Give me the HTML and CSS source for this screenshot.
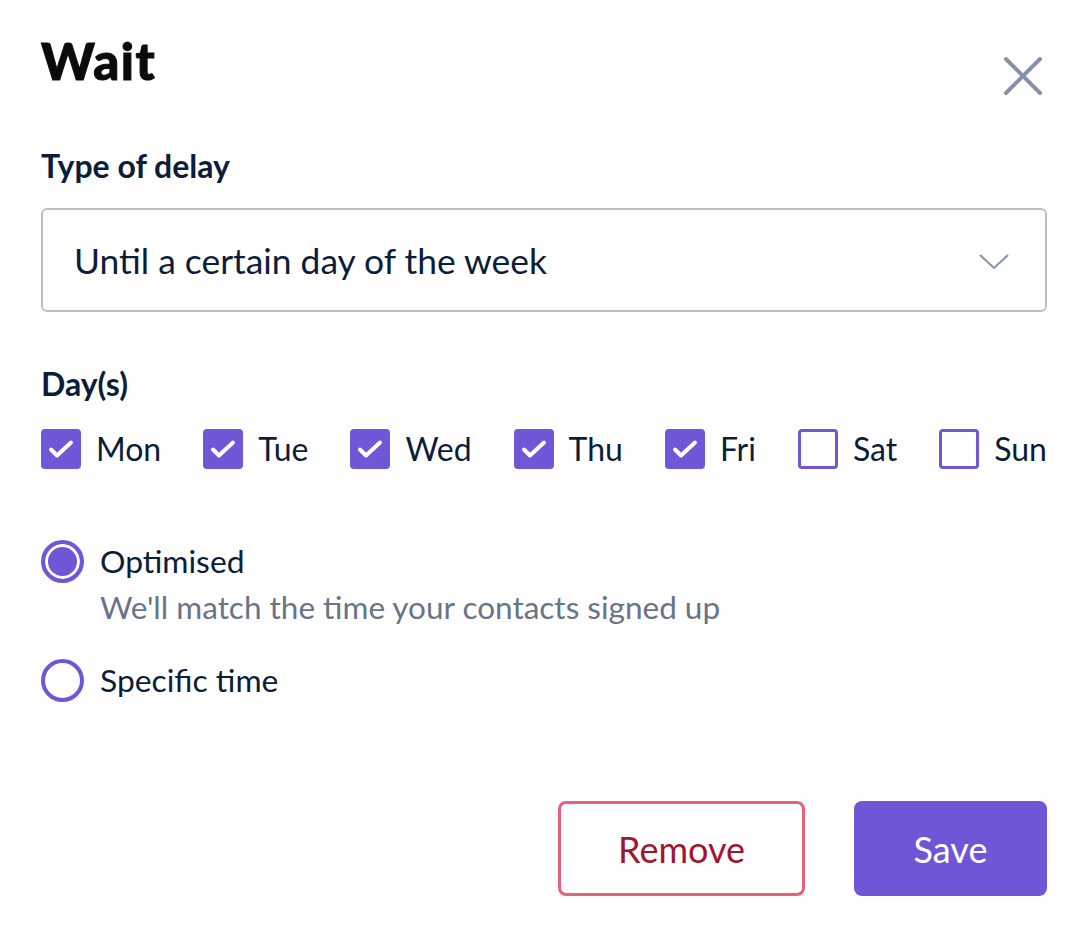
FILE: index.html
```html
<!DOCTYPE html>
<html lang="en">
<head>
    <meta charset="UTF-8">
    <meta name="viewport" content="width=device-width, initial-scale=1.0">
    <title>Wait</title>
    <link rel="stylesheet" href="styles.css">
</head>
<body>
    <div class="panel">
        <div class="panel-header">
            <h1>Wait</h1>
            <button class="close-button" aria-label="Close">
                <svg width="42" height="42" viewBox="0 0 42 42">
                    <path d="M4 4 L38 38 M38 4 L4 38" stroke="#8592a6" stroke-width="4" stroke-linecap="round" fill="none"/>
                </svg>
            </button>
        </div>

        <!-- Type of delay -->
        <div class="field-label">Type of delay</div>
        <div class="select-box">
            <span>Until a certain day of the week</span>
            <svg class="chevron" width="30" height="16" viewBox="0 0 30 16">
                <path d="M1 1 L15 14 L29 1" stroke="#8592a6" stroke-width="2" fill="none"/>
            </svg>
        </div>

        <!-- Days -->
        <div class="field-label days-label">Day(s)</div>
        <div class="day-row">
            <label class="day"><span class="check checked"><svg width="40" height="40" viewBox="0 0 40 40"><path d="M10 20.5 L16 26.5 L30 13.5" stroke="#fff" stroke-width="4" stroke-linecap="round" stroke-linejoin="round" fill="none"/></svg></span>Mon</label>
            <label class="day"><span class="check checked"><svg width="40" height="40" viewBox="0 0 40 40"><path d="M10 20.5 L16 26.5 L30 13.5" stroke="#fff" stroke-width="4" stroke-linecap="round" stroke-linejoin="round" fill="none"/></svg></span>Tue</label>
            <label class="day"><span class="check checked"><svg width="40" height="40" viewBox="0 0 40 40"><path d="M10 20.5 L16 26.5 L30 13.5" stroke="#fff" stroke-width="4" stroke-linecap="round" stroke-linejoin="round" fill="none"/></svg></span>Wed</label>
            <label class="day"><span class="check checked"><svg width="40" height="40" viewBox="0 0 40 40"><path d="M10 20.5 L16 26.5 L30 13.5" stroke="#fff" stroke-width="4" stroke-linecap="round" stroke-linejoin="round" fill="none"/></svg></span>Thu</label>
            <label class="day"><span class="check checked"><svg width="40" height="40" viewBox="0 0 40 40"><path d="M10 20.5 L16 26.5 L30 13.5" stroke="#fff" stroke-width="4" stroke-linecap="round" stroke-linejoin="round" fill="none"/></svg></span>Fri</label>
            <label class="day"><span class="check"></span>Sat</label>
            <label class="day"><span class="check"></span>Sun</label>
        </div>

        <!-- Time options -->
        <div class="radio-group">
            <div class="radio-option">
                <span class="radio selected"></span>
                <div>
                    <div class="radio-title">Optimised</div>
                    <div class="radio-desc">We'll match the time your contacts signed up</div>
                </div>
            </div>
            <div class="radio-option">
                <span class="radio"></span>
                <div>
                    <div class="radio-title">Specific time</div>
                </div>
            </div>
        </div>

        <div class="actions">
            <button class="button button-remove">Remove</button>
            <button class="button button-save">Save</button>
        </div>
    </div>
</body>
</html>
```

FILE: styles.css
```css
body {
    margin: 0;
    font-family: Lato, "Open Sans", sans-serif;
    background-color: #ffffff;
    color: #0c1d3a;
}
.panel {
    padding: 26px 45px 30px 41px;
}
.panel-header {
    display: flex;
    justify-content: space-between;
    align-items: flex-start;
    height: 71px;
}
.panel-header h1 {
    margin: 0;
    font-size: 51px;
    font-weight: 900;
    letter-spacing: 1.5px;
    -webkit-text-stroke: 1px #0b0b0b; /* heavier than plain bold */
    color: #0b0b0b;
    line-height: 69px;
}
.close-button {
    border: none;
    background: none;
    padding: 0;
    margin: 29px 3px 0 0;
    width: 42px;
    height: 42px;
    cursor: pointer;
}
.field-label {
    font-size: 32px;
    font-weight: 700;
    margin-top: 49px;
    line-height: 40px;
}
.days-label {
    margin-top: 52px;
}
.select-box {
    margin-top: 22px;
    height: 104px;
    box-sizing: border-box;
    border: 2px solid #b7bfcd;
    border-radius: 6px;
    display: flex;
    align-items: center;
    justify-content: space-between;
    padding: 0 36px 0 31px;
    font-size: 35.4px;
}
.chevron {
    margin-top: 4px;
}
.day-row {
    display: flex;
    justify-content: space-between;
    margin-top: 25px;
}
.day {
    display: flex;
    align-items: center;
    gap: 15px;
    font-size: 32px;
    line-height: 40px;
}
.check {
    width: 40px;
    height: 40px;
    box-sizing: border-box;
    border: 3px solid #6f57d8;
    border-radius: 4px;
    position: relative;
}
.check.checked {
    background-color: #6f57d8;
}
.check svg {
    position: absolute;
    left: -3px;
    top: -3px;
}
.radio-group {
    margin-top: 71px;
    display: flex;
    flex-direction: column;
    gap: 32px;
}
.radio-option {
    display: flex;
    gap: 16px;
}
.radio {
    width: 43px;
    height: 43px;
    box-sizing: border-box;
    border: 4px solid #6f57d8;
    border-radius: 50%;
    flex-shrink: 0;
}
.radio.selected {
    background-color: #6f57d8;
    box-shadow: inset 0 0 0 3px #ffffff;
}
.radio-title {
    font-size: 31.8px;
    line-height: 42px;
}
.radio-desc {
    font-size: 31.5px;
    color: #687488;
    line-height: 40px;
    margin-top: 5px;
}
.actions {
    display: flex;
    justify-content: flex-end;
    gap: 49px;
    margin-top: 99px;
}
.button {
    height: 95px;
    font-family: Lato, "Open Sans", sans-serif;
    font-size: 36px;
    border-radius: 8px;
    cursor: pointer;
}
.button-remove {
    width: 247px;
    background-color: #ffffff;
    border: 3px solid #e9607a;
    color: #a3142f;
}
.button-save {
    width: 193px;
    background-color: #6e56d6;
    border: none;
    color: #ffffff;
}
```
